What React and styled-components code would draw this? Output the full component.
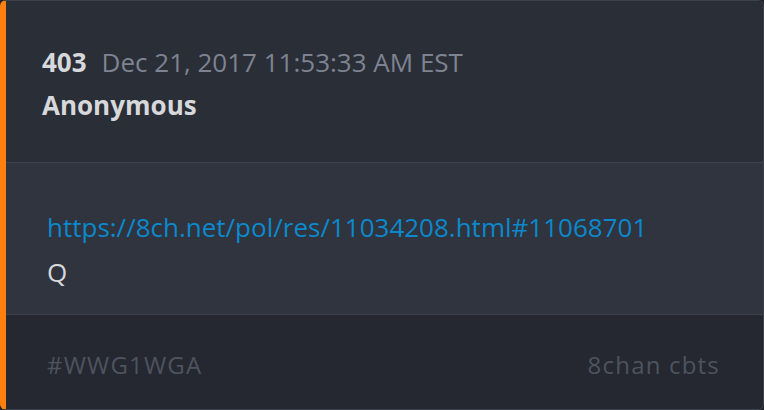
import React from 'react'
import styled, { createGlobalStyle } from 'styled-components'

const Global = createGlobalStyle`
  html, body {
    margin: 0;
    padding: 0;
    background: #1e2128;
  }
  body {
    font-family: "Open Sans", "Noto Sans", sans-serif;
  }
`

function App() {
  return (
    <>
      <Global />
      <Card>
        <Header>
          <MetaRow>
            <PostNumber>403</PostNumber>
            <PostDate>Dec 21, 2017 11:53:33 AM EST</PostDate>
          </MetaRow>
          <Author>Anonymous</Author>
        </Header>

        <Body>
          <Link href="#">https://8ch.net/pol/res/11034208.html#11068701</Link>
          <Text>Q</Text>
        </Body>

        <Footer>
          <FooterText>#WWG1WGA</FooterText>
          <FooterText>8chan cbts</FooterText>
        </Footer>
      </Card>
    </>
  )
}

const Card = styled.div`
  width: 764px;
  height: 410px;
  box-sizing: border-box;
  display: flex;
  flex-direction: column;
  border: 1px solid #3d414c;
  border-left: 6px solid #ff7f0f;
  border-radius: 6px;
  overflow: hidden;
  background: #2a2e37;
`

const Header = styled.div`
  height: 162px;
  flex-shrink: 0;
  box-sizing: border-box;
  padding: 43px 0 0 36px;
  background: #2a2e37;
  border-bottom: 1px solid #3e424d;
`

const MetaRow = styled.div`
  display: flex;
  align-items: baseline;
  gap: 15px;
  line-height: 36px;
`

const PostNumber = styled.span`
  font-size: 26px;
  font-weight: 700;
  color: #d7d8db;
`

const PostDate = styled.span`
  font-size: 26px;
  color: #7e8392;
`

const Author = styled.div`
  font-size: 26px;
  font-weight: 700;
  color: #d7d8db;
  line-height: 36px;
  margin-top: 7px;
`

const Body = styled.div`
  height: 152px;
  flex-shrink: 0;
  box-sizing: border-box;
  padding: 46px 0 0 41px;
  background: #2f343e;
  border-bottom: 1px solid #3e424d;
  display: flex;
  flex-direction: column;
  gap: 9px;
`

const Link = styled.a`
  font-size: 26px;
  line-height: 36px;
  color: #0c88cc;
  text-decoration: none;
`

const Text = styled.div`
  font-size: 26px;
  line-height: 36px;
  color: #d7d8db;
`

const Footer = styled.div`
  flex: 1;
  display: flex;
  align-items: center;
  justify-content: space-between;
  padding: 4px 43px 0 41px;
  background: #252830;
`

const FooterText = styled.span`
  font-size: 24px;
  color: #4e5360;
  letter-spacing: 1.2px;
`

export default App
